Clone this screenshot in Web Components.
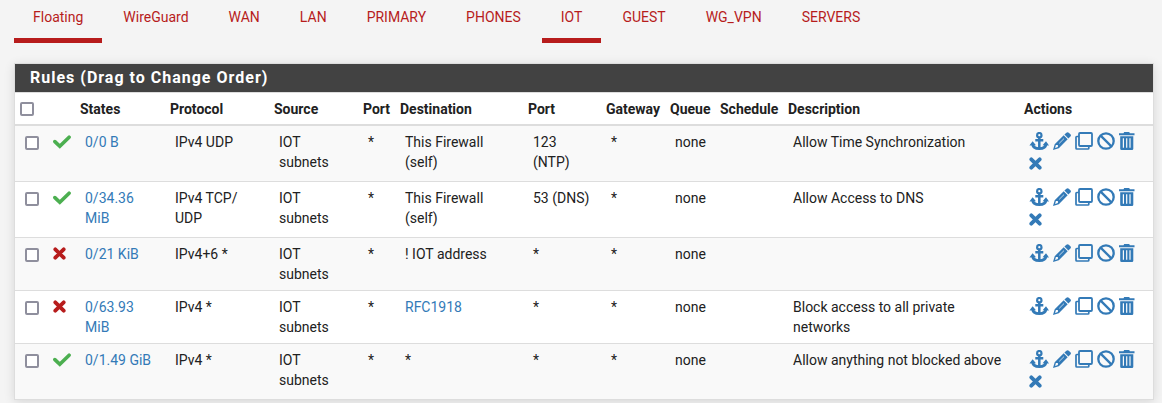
<!DOCTYPE html>
<html lang="en">
<head>
<meta charset="utf-8">
<meta name="viewport" content="width=device-width, initial-scale=1">
<title>Firewall: Rules</title>
<style>
  body {
    margin: 0;
    background: #f4f4f4;
    color: #212121;
    font: 14px/20px Roboto, "Liberation Sans", sans-serif;
  }
</style>
</head>
<body>
<firewall-page>
  <tab-bar slot="tabs">
    <tab-link active>Floating</tab-link>
    <tab-link>WireGuard</tab-link>
    <tab-link>WAN</tab-link>
    <tab-link>LAN</tab-link>
    <tab-link>PRIMARY</tab-link>
    <tab-link>PHONES</tab-link>
    <tab-link active>IOT</tab-link>
    <tab-link>GUEST</tab-link>
    <tab-link>WG_VPN</tab-link>
    <tab-link>SERVERS</tab-link>
  </tab-bar>
  <rules-panel>
    <span slot="title">Rules (Drag to Change Order)</span>
    <rules-table></rules-table>
  </rules-panel>
</firewall-page>
<script>
  class BaseElement extends HTMLElement {
    connectedCallback() {
      if (this.shadowRoot) return;
      this.attachShadow({ mode: "open" }).innerHTML = this.render();
    }
  }

  customElements.define("firewall-page", class extends BaseElement {
    render() {
      return `<style>
        :host { display: block; padding: 0 8px 3px 14px; }
        main { display: flex; flex-direction: column; gap: 20px; }
      </style>
      <main><slot name="tabs"></slot><slot></slot></main>`;
    }
  });

  customElements.define("tab-bar", class extends BaseElement {
    render() {
      return `<style>
        :host { display: block; }
        nav { display: flex; gap: 2px; }
      </style>
      <nav aria-label="Interfaces"><slot></slot></nav>`;
    }
  });

  customElements.define("tab-link", class extends BaseElement {
    render() {
      return `<style>
        :host { display: block; }
        a {
          display: block; padding: 7px 19px 11px; color: #b71c1c;
          text-decoration: none; border-bottom: 5px solid transparent;
        }
        :host([active]) a { border-color: #b71c1c; }
      </style>
      <a href="#"><slot></slot></a>`;
    }
  });

  customElements.define("rules-panel", class extends BaseElement {
    render() {
      return `<style>
        :host {
          display: block; background: #fff; border: 1px solid #ddd;
          box-shadow: 0 2px 10px rgba(0, 0, 0, .12);
        }
        h2 {
          margin: 0; padding: 4px 15px; background: #424242; color: #fff;
          font-size: 16px; line-height: 20px; font-weight: 700; letter-spacing: 1px;
        }
      </style>
      <section><h2><slot name="title"></slot></h2><slot></slot></section>`;
    }
  });

  const ICONS = {
    check: [18, 14, '<path d="M1.9 6.6 6.8 11.2 16.1 2.2" fill="none" stroke="currentColor" stroke-width="3.6" stroke-linecap="round"/>'],
    cross: [13, 13, '<path d="M2.3 2.3 10.7 10.7M10.7 2.3 2.3 10.7" fill="none" stroke="currentColor" stroke-width="3.8" stroke-linecap="round"/>'],
    anchor: [20, 18, '<g fill="none" stroke="currentColor" stroke-width="2.2"><circle cx="10.3" cy="3.2" r="2.2"/><path d="M10.3 5.2V16.4M6.3 8.3H14.3" stroke-width="2.5"/><path d="M3.4 11.5C3.8 15 6.6 16.6 10.3 16.6S16.8 15 17.2 11.5" stroke-width="2.7"/></g><path d="M3.6 9.2 7 13.2 .4 13.4ZM17 9.2 20 13.4 13.6 13.2Z" fill="currentColor"/>'],
    pencil: [18, 18, '<path d="M13.4.7Q14.6-.4 15.8.7L17.4 2.3Q18.5 3.4 17.4 4.6L15.4 6.6 11.4 2.6ZM10.7 3.3 14.7 7.3 5.8 16.3 0 18 1.7 12.2ZM2.9 13.1 2.1 15.9 4.9 15.1V13.1Z" fill="currentColor" fill-rule="evenodd"/><path d="M6.2 11.4 11 6.6" stroke="#fff" stroke-width=".7"/>'],
    clone: [18, 18, '<g fill="none" stroke="currentColor"><rect x="4" y="1" width="13" height="13" rx="1" stroke-width="1.8"/><path d="M4 4.5H1.8Q1 4.5 1 5.3V16.2Q1 17 1.8 17H13Q13.8 17 13.8 16.2V14" stroke-width="1.7"/></g>'],
    ban: [18, 18, '<g fill="none" stroke="currentColor" stroke-width="2.3"><circle cx="9" cy="9" r="7.7"/><path d="M3.6 3.6 14.4 14.4"/></g>'],
    trash: [16, 18, '<path d="M5.2 0H10.2L10.9 1.2H15.5V3.2H0V1.2H4.5ZM1.2 4.3H14.3V16.7Q14.3 18 13 18H2.5Q1.2 18 1.2 16.7ZM3.8 6.3V15.8H5V6.3ZM7.1 6.3V15.8H8.3V6.3ZM10.4 6.3V15.8H11.6V6.3Z" fill="currentColor" fill-rule="evenodd"/>']
  };

  customElements.define("rule-icon", class extends BaseElement {
    render() {
      const [w, h, art] = ICONS[this.getAttribute("name")];
      return `<style>
        :host { display: block; }
        svg { display: block; }
      </style>
      <svg width="${w}" height="${h}" viewBox="0 0 ${w} ${h}" aria-hidden="true">${art}</svg>`;
    }
  });

  customElements.define("rule-actions", class extends BaseElement {
    render() {
      const actions = [["anchor", "Move checked rules"], ["pencil", "Edit"], ["clone", "Copy"], ["ban", "Disable"], ["trash", "Delete"]];
      if (this.hasAttribute("killable")) actions.push(["cross", "Kill states"]);
      return `<style>
        :host { display: flex; flex-wrap: wrap; gap: 3px 4px; }
        a { display: block; height: 20px; color: #337ab7; }
        a.cross { padding-top: 2px; height: 18px; }
      </style>
      ${actions.map(([n, t]) => `<a href="#" class="${n}" aria-label="${t}"><rule-icon name="${n}"></rule-icon></a>`).join("")}`;
    }
  });

  customElements.define("check-box", class extends BaseElement {
    render() {
      return `<style>
        :host { display: block; }
        input {
          appearance: none; display: block; box-sizing: border-box; width: 14px; height: 14px;
          margin: 0; background: #fff; border: 2px solid #8f8f9d; border-radius: 2px;
        }
        input:checked { background: #337ab7; }
      </style>
      <input type="checkbox" aria-label="${this.getAttribute("label")}">`;
    }
  });

  const RULES = [
    { pass: true, states: "0/0 B", proto: "IPv4 UDP", dest: "This Firewall (self)", port: "123 (NTP)", text: "Allow Time Synchronization", kill: true },
    { pass: true, states: "0/34.36 MiB", proto: "IPv4 TCP/<wbr>UDP", dest: "This Firewall (self)", port: "53 (DNS)", text: "Allow Access to DNS", kill: true },
    { pass: false, states: "0/21 KiB", proto: "IPv4+6 *", dest: "! IOT address", port: "*", text: "" },
    { pass: false, states: "0/63.93 MiB", proto: "IPv4 *", dest: '<a href="#">RFC1918</a>', port: "*", text: "Block access to all private networks" },
    { pass: true, states: "0/1.49 GiB", proto: "IPv4 *", dest: "*", port: "*", text: "Allow anything not blocked above", kill: true }
  ];

  customElements.define("rules-table", class extends BaseElement {
    render() {
      const widths = [28, 32, 90, 104, 89, 37, 128, 78, 64, 50, 68, 0, 134];
      const heads = ["States", "Protocol", "Source", "Port", "Destination", "Port", "Gateway", "Queue", "Schedule", "Description", "Actions"];
      return `<style>
        :host { display: block; }
        table { width: 100%; table-layout: fixed; border-collapse: separate; border-spacing: 0; border-top: 1px solid #ddd; }
        th { padding: 6px 0 5px 5px; text-align: left; vertical-align: middle; font-weight: 700; white-space: nowrap; }
        td { padding: 6px 10px; vertical-align: top; border-top: 1px solid #ddd; }
        thead th { border-bottom: 1px solid #ddd; }
        tbody tr:nth-child(odd) { background: #f9f9f9; }
        td.pick { padding: 10px 0 0 10px; }
        td.state { padding: 9px 0 0 10px; }
        .pass { color: #4caf50; }
        .block { color: #b71c1c; }
        a { color: #337ab7; text-decoration: none; }
      </style>
      <table>
        <colgroup>${widths.map(w => `<col${w ? ` style="width:${w}px"` : ""}>`).join("")}</colgroup>
        <thead><tr>
          <th><check-box label="Select all rules"></check-box></th><th></th>
          ${heads.map(h => `<th scope="col">${h}</th>`).join("")}
        </tr></thead>
        <tbody>${RULES.map((r, i) => `<tr>
          <td class="pick"><check-box label="Select rule ${i + 1}"></check-box></td>
          <td class="state ${r.pass ? "pass" : "block"}"><rule-icon name="${r.pass ? "check" : "cross"}"></rule-icon></td>
          <td><a href="#">${r.states}</a></td><td>${r.proto}</td><td>IOT subnets</td><td>*</td>
          <td>${r.dest}</td><td>${r.port}</td><td>*</td><td>none</td><td></td><td>${r.text}</td>
          <td class="actions"><rule-actions${r.kill ? " killable" : ""}></rule-actions></td>
        </tr>`).join("")}</tbody>
      </table>`;
    }
  });
</script>
</body>
</html>
